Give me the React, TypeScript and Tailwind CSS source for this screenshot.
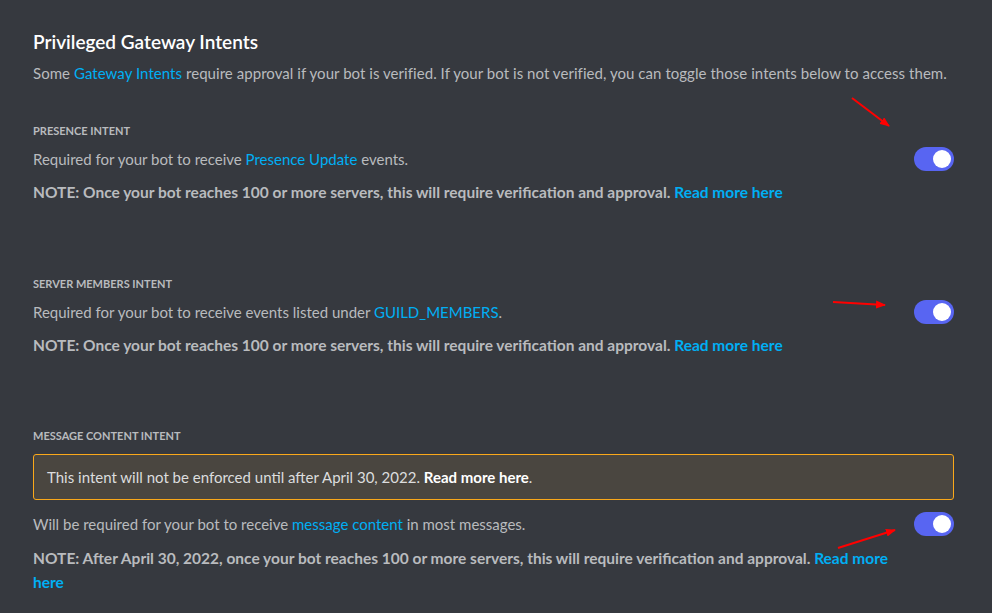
import React from "react";

const font = { fontFamily: "Lato, 'Liberation Sans', Arial, sans-serif" };

function Toggle() {
  return (
    <div className="w-[40px] h-[24px] rounded-full bg-[#5865f2] flex items-center justify-end pr-[3px] shrink-0">
      <div className="w-[18px] h-[18px] rounded-full bg-white" />
    </div>
  );
}

function Link({ children, bold }: { children: React.ReactNode; bold?: boolean }) {
  return <span className={`text-[#00aff4] ${bold ? "font-bold" : ""}`}>{children}</span>;
}

interface Intent {
  title: string;
  body: React.ReactNode;
  note: React.ReactNode;
  warning?: boolean;
}

const intents: Intent[] = [
  {
    title: "Presence Intent",
    body: (
      <>
        Required for your bot to receive <Link>Presence Update</Link> events.
      </>
    ),
    note: "NOTE: Once your bot reaches 100 or more servers, this will require verification and approval.",
  },
  {
    title: "Server Members Intent",
    body: (
      <>
        Required for your bot to receive events listed under <Link>GUILD_MEMBERS</Link>.
      </>
    ),
    note: "NOTE: Once your bot reaches 100 or more servers, this will require verification and approval.",
  },
  {
    title: "Message Content Intent",
    warning: true,
    body: (
      <>
        Will be required for your bot to receive <Link>message content</Link> in most messages.
      </>
    ),
    note: "NOTE: After April 30, 2022, once your bot reaches 100 or more servers, this will require verification and approval.",
  },
];

export default function App() {
  return (
    <div className="relative min-h-screen bg-[#36393f] pl-[33px] pr-[38px] pt-[30px] pb-[20px]" style={font}>
      {/* Heading */}
      <h2 className="text-[19px] leading-[24px] font-semibold text-white">Privileged Gateway Intents</h2>
      <p className="mt-[9px] text-[15px] leading-[20px] tracking-[0.05px] text-[#b9bbbe] whitespace-nowrap">
        Some <Link>Gateway Intents</Link> require approval if your bot is verified. If your bot is not verified, you can
        toggle those intents below to access them.
      </p>

      {intents.map((it, i) => (
        <div key={i} className={i === 0 ? "mt-[40px]" : i === 1 ? "mt-[72px]" : "mt-[71px]"}>
          <h3 className="text-[11px] leading-[16px] font-bold uppercase text-[#b9bbbe]">{it.title}</h3>

          {it.warning && (
            <div className="mt-[10px] h-[46px] flex items-center px-[13px] rounded-[3px] border border-[#faa81a] bg-[#4a4640] text-[15px] text-[#dcddde]">
              <span>
                This intent will not be enforced until after April 30, 2022.{" "}
                <span className="font-bold text-white">Read more here</span>.
              </span>
            </div>
          )}

          <div className={`flex items-center justify-between ${it.warning ? "mt-[12px]" : "mt-[8px]"}`}>
            <p className="text-[15px] leading-[20px] text-[#b9bbbe]">{it.body}</p>
            <Toggle />
          </div>

          <p
            className={`${it.warning ? "mt-[10px]" : "mt-[9px]"} w-[882px] text-[15.5px] leading-[24px] font-bold text-[#b9bbbe]`}
          >
            {it.note} <Link bold>Read more here</Link>
          </p>
        </div>
      ))}

      {/* Red annotation arrows */}
      <svg className="absolute left-0 top-0 pointer-events-none" width="992" height="613">
        <defs>
          <marker id="ah" markerWidth="10" markerHeight="8" refX="9" refY="4" orient="auto" markerUnits="userSpaceOnUse">
            <path d="M0 0 L10 4 L0 8 Z" fill="#ff0000" />
          </marker>
        </defs>
        <line x1="852" y1="98" x2="889" y2="126" stroke="#ff0000" strokeWidth="2" markerEnd="url(#ah)" />
        <line x1="833" y1="302" x2="885" y2="305" stroke="#ff0000" strokeWidth="2" markerEnd="url(#ah)" />
        <line x1="838" y1="548" x2="895" y2="530" stroke="#ff0000" strokeWidth="2" markerEnd="url(#ah)" />
      </svg>
    </div>
  );
}
